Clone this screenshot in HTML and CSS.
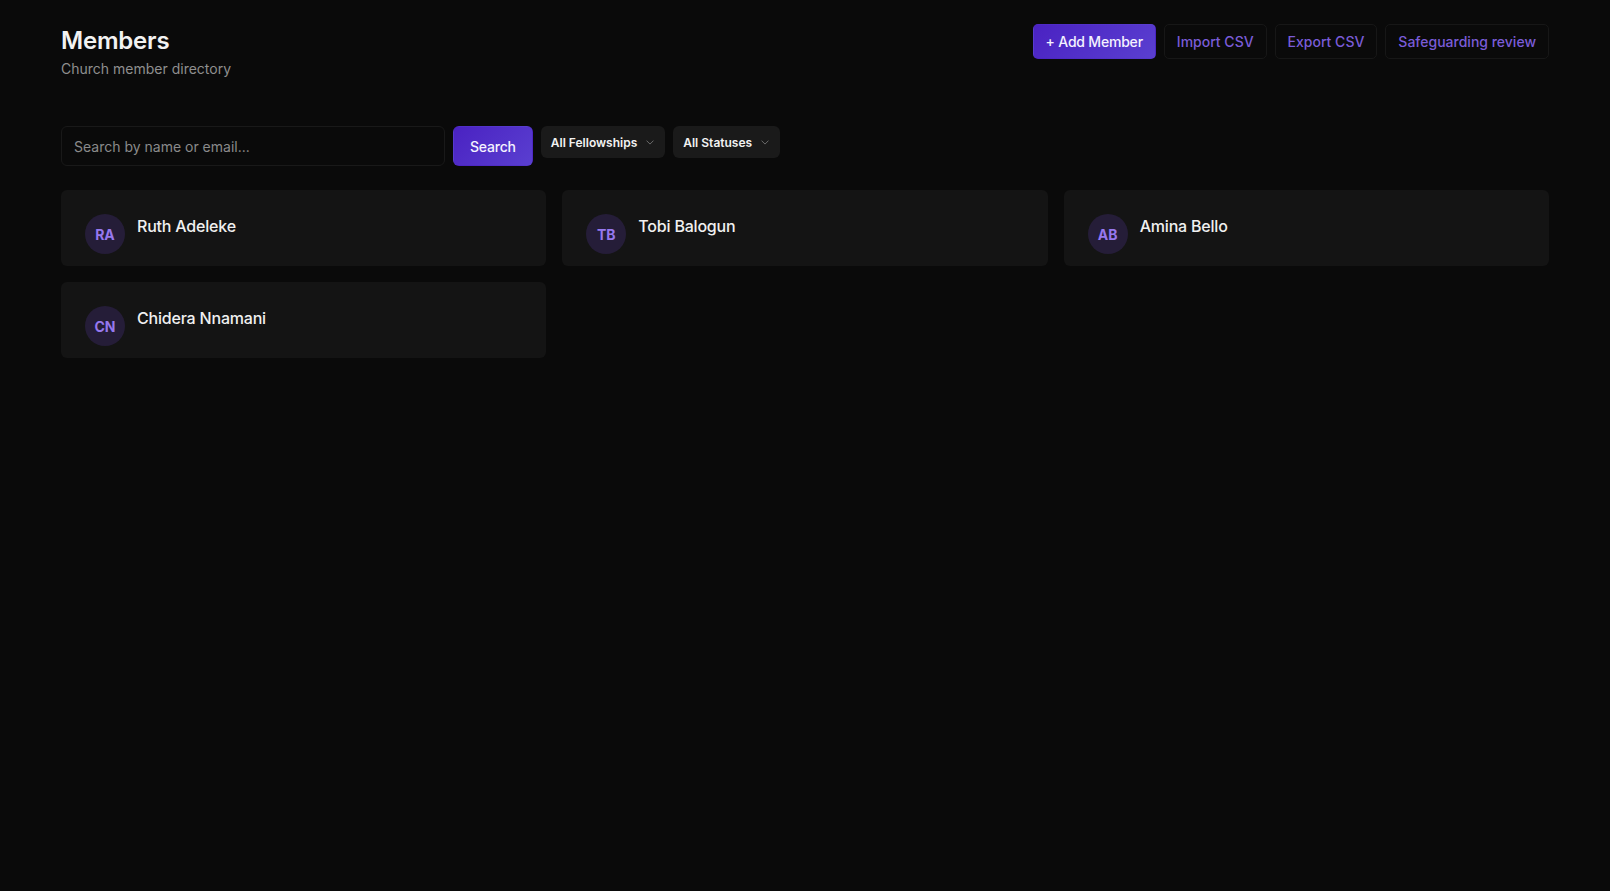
FILE: index.html
```html
<!DOCTYPE html>
<html lang="en">
<head>
<meta charset="utf-8">
<title>Members</title>
<link rel="stylesheet" href="styles.css">
</head>
<body>
<div class="page">
  <header class="header">
    <div class="heading">
      <h1 class="title">Members</h1>
      <p class="subtitle">Church member directory</p>
    </div>
    <div class="actions">
      <button class="btn btn-primary">+ Add Member</button>
      <button class="btn btn-outline">Import CSV</button>
      <button class="btn btn-outline">Export CSV</button>
      <button class="btn btn-outline">Safeguarding review</button>
    </div>
  </header>

  <div class="filters">
    <input class="search-input" type="text" placeholder="Search by name or email...">
    <button class="btn btn-primary btn-search">Search</button>
    <div class="select">
      <span>All Fellowships</span>
      <svg class="chev" viewBox="0 0 10 6" width="8" height="5"><path d="M1 1l4 4 4-4" fill="none" stroke="currentColor" stroke-width="1.2" stroke-linecap="round" stroke-linejoin="round"/></svg>
    </div>
    <div class="select">
      <span>All Statuses</span>
      <svg class="chev" viewBox="0 0 10 6" width="8" height="5"><path d="M1 1l4 4 4-4" fill="none" stroke="currentColor" stroke-width="1.2" stroke-linecap="round" stroke-linejoin="round"/></svg>
    </div>
  </div>

  <div class="grid">
    <div class="card"><div class="avatar">RA</div><div class="name">Ruth Adeleke</div></div>
    <div class="card"><div class="avatar">TB</div><div class="name">Tobi Balogun</div></div>
    <div class="card"><div class="avatar">AB</div><div class="name">Amina Bello</div></div>
    <div class="card"><div class="avatar">CN</div><div class="name">Chidera Nnamani</div></div>
  </div>
</div>
</body>
</html>
```
FILE: styles.css
```css
* { box-sizing: border-box; }
html, body {
  margin: 0;
  padding: 0;
  background: #0a0a0a;
  color: #ededed;
  font-family: Inter, "Noto Sans", "Liberation Sans", sans-serif;
}
.page {
  max-width: 1488px;
  margin: 0 auto;
  padding-top: 24px;
}
.header {
  display: flex;
  justify-content: space-between;
  align-items: flex-start;
}
.heading {
  padding-top: 1px;
}
.title {
  margin: 0;
  font-size: 24px;
  line-height: 32px;
  font-weight: 600;
  color: #f2f2f2;
  letter-spacing: -0.2px;
}
.subtitle {
  margin: 2px 0 0;
  font-size: 14px;
  line-height: 20px;
  color: #8f8f8f;
}
.actions {
  display: flex;
  gap: 8px;
}
.btn {
  font-family: inherit;
  font-size: 14px;
  font-weight: 500;
  height: 35px;
  padding: 0 12px;
  border-radius: 5px;
  border: 1px solid transparent;
  cursor: pointer;
  display: inline-flex;
  align-items: center;
}
.btn-primary {
  background: linear-gradient(135deg, #4a22c2 0%, #5a3fd0 100%);
  color: #f4f2ff;
  letter-spacing: -0.2px;
}
.btn-outline {
  background: #0a0a0a;
  border-color: #171717;
  color: #7a5cd8;
}
.filters {
  display: flex;
  align-items: flex-start;
  gap: 8px;
  margin-top: 47px;
}
.search-input {
  width: 384px;
  height: 40px;
  padding: 0 12px;
  background: #0a0a0a;
  border: 1px solid #191919;
  border-radius: 6px;
  color: #ededed;
  font-family: inherit;
  font-size: 14px;
  outline: none;
}
.search-input::placeholder { color: #8a8a8a; }
.btn-search {
  height: 40px;
  padding: 0 16px;
  border-radius: 6px;
}
.select {
  height: 32px;
  display: flex;
  align-items: center;
  gap: 9px;
  padding: 0 11px 0 10px;
  background: #1a1a1a;
  border-radius: 6px;
  font-size: 12px;
  font-weight: 600;
  color: #f2f2f2;
}
.chev { color: #6f6f6f; }
.grid {
  display: grid;
  grid-template-columns: repeat(3, 1fr);
  gap: 16px;
  margin-top: 24px;
}
.card {
  display: flex;
  align-items: flex-start;
  gap: 12px;
  height: 76px;
  padding: 24px;
  background: #141414;
  border-radius: 6px;
}
.avatar {
  width: 40px;
  height: 40px;
  flex: none;
  border-radius: 50%;
  background: #251d38;
  color: #9678ee;
  font-size: 14px;
  font-weight: 700;
  display: flex;
  align-items: center;
  justify-content: center;
}
.name {
  font-size: 16px;
  line-height: 24px;
  font-weight: 500;
  color: #f0f0f0;
  letter-spacing: -0.2px;
}
```
